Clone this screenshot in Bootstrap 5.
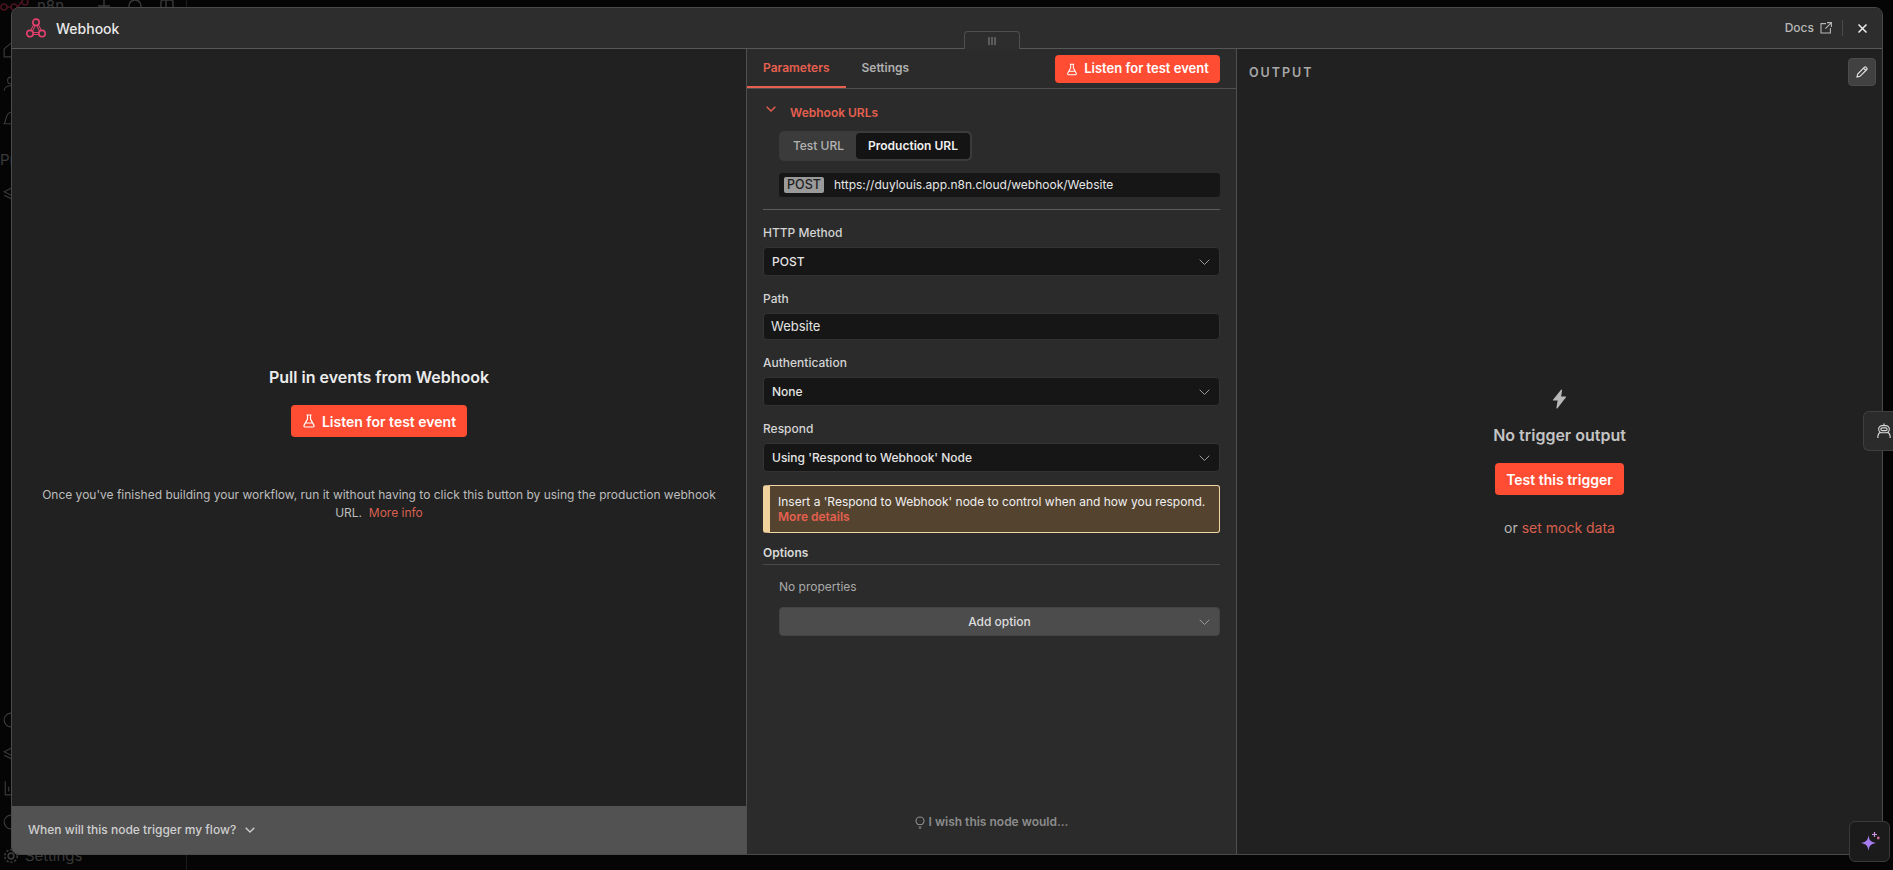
<!DOCTYPE html>
<html lang="en">
<head>
  <meta charset="UTF-8" />
  <title>Webhook</title>
  <meta name="viewport" content="width=device-width, initial-scale=1" />
  <link href="https://cdn.jsdelivr.net/npm/bootstrap@5.3.2/dist/css/bootstrap.min.css" rel="stylesheet" />
  <style>
    html, body { height: 100%; }
    body {
      background-color: #050505;
      font-family: Inter, "Liberation Sans", sans-serif;
      font-size: 12px;
      overflow: hidden;
      color: #e4e4e4;
    }
    svg { display: block; flex: none; }

    /* dimmed app behind the modal */
    .app-side {
      width: 187px;
      height: 873px;
      border-right: 1px solid #1c1c1c;
      color: #3a3a3a;
    }
    .app-top { height: 18px; margin: -3px 0 18px; flex-shrink: 0; }
    .app-logo { color: #4a1320; margin-right: 7px; }
    .app-brand { font-size: 15px; margin-right: 34px; }
    .top-gap { margin-right: 18px; }
    .app-item { height: 34px; flex-shrink: 0; padding-left: 3px; font-size: 15px; gap: 6px; }
    .app-head { padding-left: 0; margin-top: 8px; }
    .app-foot { margin-top: auto; }

    /* modal */
    .ndv {
      position: absolute;
      left: 11px;
      top: 7px;
      width: 1872px;
      height: 848px;
      background: #212121;
      border: 1px solid #4a4a4a;
      border-radius: 8px;
      overflow: hidden;
    }
    .ndv-head {
      height: 41px;
      flex-shrink: 0;
      background: #2d2d2d;
      border-bottom: 1px solid #575757;
      padding: 0 14px;
    }
    .ndv-title { font-size: 14px; font-weight: 500; color: #e8e8e8; margin-left: 10px; }
    .docs-link { color: #b8b8b8; font-weight: 500; font-size: 12px; text-decoration: none; gap: 6px; }
    .head-sep { width: 1px; height: 16px; background: #4a4a4a; margin: 0 14px 0 10px; }
    .ndv-body { flex: 1; min-height: 0; }

    .pane-input { width: 734px; flex-shrink: 0; }
    .input-mid { padding-top: 32px; }
    .pull-title { font-size: 16px; font-weight: 600; color: #ececec; margin-bottom: 16px; }
    .pull-note { font-size: 12px; line-height: 18px; color: #bdbdbd; width: 690px; margin-top: 49px; }
    .input-foot {
      height: 48px;
      flex-shrink: 0;
      background: #525252;
      padding-left: 16px;
      color: #cfcfcf;
      font-weight: 500;
      gap: 9px;
    }

    .pane-params {
      width: 491px;
      flex-shrink: 0;
      background: #2b2b2b;
      border-left: 1px solid #4f4f4f;
      border-right: 1px solid #4f4f4f;
    }
    .drag-tab {
      position: absolute;
      left: 952px;
      top: 23px;
      width: 56px;
      height: 18px;
      background: #2d2d2d;
      border: 1px solid #4f4f4f;
      border-bottom: 0;
      border-radius: 4px 4px 0 0;
      color: #8a8a8a;
    }
    .tab-row { height: 40px; flex-shrink: 0; border-bottom: 1px solid #4f4f4f; padding-right: 16px; }
    .tab-link {
      padding: 0 16px;
      height: 39px;
      line-height: 38px;
      font-weight: 600;
      font-size: 12px;
      color: #b0b0b0;
      text-decoration: none;
    }
    .tab-link.on { color: #e5604f; border-bottom: 2px solid #e5604f; }

    .btn-hot, .btn-hot:hover {
      background: #ff4d33;
      border: 0;
      color: #fff;
      font-weight: 600;
      border-radius: 4px;
      gap: 6px;
    }
    .btn-top { height: 28px; width: 165px; font-size: 13px; padding: 0; margin-top: 6px; }
    .btn-mid { height: 32px; width: 176px; font-size: 14px; padding: 0; }
    .btn-trig { height: 32px; width: 129px; font-size: 14px; padding: 0; }

    .params-body { padding: 0 16px; }
    .hook-head { height: 42px; flex-shrink: 0; padding: 16px 0 0 3px; line-height: 15px; color: #e5604f; font-weight: 600; font-size: 12px; gap: 14px; }
    .hook-caret { margin-top: 1px; }
    .seg {
      width: 193px;
      height: 30px;
      flex-shrink: 0;
      margin-left: 16px;
      padding: 2px;
      background: #3b3b3b;
      border-radius: 5px;
    }
    .seg span { display: flex; align-items: center; justify-content: center; font-weight: 500; font-size: 12px; border-radius: 4px; }
    .seg .off { width: 75px; color: #b3b3b3; }
    .seg .act { width: 114px; background: #141414; color: #f0f0f0; font-weight: 600; }
    .url-box {
      margin: 12px 0 12px 16px;
      height: 24px;
      flex-shrink: 0;
      background: #161616;
      border-radius: 3px;
      padding-left: 5px;
      color: #e8e8e8;
      font-size: 12px;
    }
    .url-verb {
      width: 40px;
      height: 16px;
      line-height: 16px;
      text-align: center;
      background: #9a9a9a;
      color: #1e1e1e;
      border-radius: 2px;
      font-size: 12.5px;
      font-weight: 500;
      margin-right: 10px;
    }
    .url-rule { border-top: 1px solid #5c5c5c; margin: 0 0 15px; }

    .fld-label { display: block; font-size: 12px; font-weight: 500; color: #d4d4d4; line-height: 16px; margin: 0 0 6px; }
    .fld-box.form-control {
      background: #161616;
      border: 1px solid #333;
      border-radius: 4px;
      color: #e4e4e4;
      font-size: 12px;
      font-weight: 500;
      height: 29px;
      min-height: 0;
      flex-shrink: 0;
      line-height: 1;
      padding: 0 27px 0 8px;
      margin-bottom: 15px;
      position: relative;
    }
    .fld-box.fld-text { height: 27px; font-weight: 400; font-size: 13px; padding-left: 7px; }
    .fld-caret { position: absolute; right: 9px; top: 11px; color: #9a9a9a; }

    .warn-box.alert {
      background: #54432f;
      border: 1px solid #f5d7a3;
      border-left: 7px solid #f0d29c;
      border-radius: 3px;
      height: 48px;
      flex-shrink: 0;
      padding: 8px 8px 0 8px;
      margin: -2px 0 12px;
      color: #f0f0f0;
      font-size: 12px;
      font-weight: 400;
      line-height: 15px;
    }
    .warn-box a { color: #e5604f; font-weight: 600; text-decoration: none; display: block; }
    .opt-head { font-weight: 600; color: #d8d8d8; line-height: 16px; padding-bottom: 3px; border-bottom: 1px solid #4a4a4a; }
    .opt-none { margin: 13px 0 11px 16px; line-height: 18px; color: #a9a9a9; font-size: 12px; }
    .opt-add {
      margin-left: 16px;
      height: 29px;
      flex-shrink: 0;
      background: #4c4c4c;
      border: 1px solid #444;
      border-radius: 4px;
      color: #dedede;
      font-weight: 500;
      font-size: 12px;
      position: relative;
    }
    .wish { color: #8c8c8c; font-weight: 600; font-size: 12px; gap: 4px; height: 64px; flex-shrink: 0; }

    .pane-out { flex: 1; position: relative; }
    .out-label { position: absolute; left: 12px; top: 15px; font-size: 12.5px; font-weight: 600; letter-spacing: 2px; color: #a8a8a8; }
    .out-edit {
      position: absolute;
      right: 6px;
      top: 9px;
      width: 28px;
      height: 28px;
      background: #414141;
      border: 1px solid #4c4c4c;
      border-radius: 4px;
      padding: 0;
      color: #e8e8e8;
    }
    .out-mid { padding-top: 340px; }
    .out-bolt { color: #b8b8b8; margin-bottom: 16px; }
    .out-title { font-size: 16px; font-weight: 600; color: #c4c4c4; line-height: 20px; margin-bottom: 18px; }
    .out-or { margin-top: 22px; font-size: 14px; color: #b8b8b8; }
    .hot-link { color: #d9604f; text-decoration: none; }

    .side-tab {
      position: absolute;
      right: 0;
      top: 411px;
      width: 30px;
      height: 40px;
      background: #2b2b2b;
      border: 1px solid #3f3f3f;
      border-right: 0;
      border-radius: 6px 0 0 6px;
      color: #d8d8d8;
      padding-left: 12px;
    }
    .ai-btn {
      position: absolute;
      left: 1849px;
      top: 821px;
      width: 41px;
      height: 41px;
      background: #1b1b1b;
      border: 1px solid #3a3a3a;
      border-radius: 6px;
      padding: 0;
    }
  </style>
</head>
<body>
  <!-- app behind the modal, mostly hidden -->
  <aside class="app-side d-flex flex-column">
    <div class="app-top d-flex align-items-center">
      <svg class="app-logo" width="30" height="16" viewBox="0 0 30 16" fill="none" stroke="currentColor" stroke-width="1.6"><circle cx="4" cy="9" r="3"/><circle cx="14" cy="9" r="3"/><circle cx="25" cy="4" r="3"/><path d="M7 9h4M17 9c3 0 2-5 5-5"/></svg>
      <span class="app-brand">n8n</span>
      <svg class="top-gap" width="12" height="12" viewBox="0 0 12 12" stroke="currentColor" stroke-width="1.4"><path d="M6 0v12M0 6h12"/></svg>
      <svg class="top-gap" width="14" height="14" viewBox="0 0 14 14" fill="none" stroke="currentColor" stroke-width="1.4"><circle cx="7" cy="7" r="6"/></svg>
      <svg width="14" height="14" viewBox="0 0 14 14" fill="none" stroke="currentColor" stroke-width="1.4"><rect x="1" y="1" width="12" height="12" rx="2"/><path d="M6 1v12"/></svg>
    </div>
    <div class="app-item d-flex align-items-center"><svg width="16" height="16" viewBox="0 0 14 14" fill="none" stroke="currentColor"><path d="M1 6l6-5 6 5v7H1z"/></svg></div>
    <div class="app-item d-flex align-items-center"><svg width="16" height="16" viewBox="0 0 14 14" fill="none" stroke="currentColor"><circle cx="7" cy="4" r="3"/><path d="M1 13c0-6 12-6 12 0"/></svg></div>
    <div class="app-item d-flex align-items-center"><svg width="16" height="16" viewBox="0 0 14 14" fill="none" stroke="currentColor"><path d="M1 12c2-2 1-10 6-10s4 8 6 10z"/></svg></div>
    <div class="app-item app-head d-flex align-items-center">Projects</div>
    <div class="app-item d-flex align-items-center"><svg width="16" height="16" viewBox="0 0 14 14" fill="none" stroke="currentColor"><path d="M1 5l6-3 6 3-6 3zM1 8l6 3 6-3"/></svg></div>
    <div class="app-item app-foot d-flex align-items-center"><svg width="16" height="16" viewBox="0 0 14 14" fill="none" stroke="currentColor"><circle cx="7" cy="7" r="6"/></svg></div>
    <div class="app-item d-flex align-items-center"><svg width="16" height="16" viewBox="0 0 14 14" fill="none" stroke="currentColor"><path d="M1 5l6-3 6 3-6 3zM1 8l6 3 6-3"/></svg></div>
    <div class="app-item d-flex align-items-center"><svg width="16" height="16" viewBox="0 0 14 14" fill="none" stroke="currentColor"><path d="M2 1v12h11M5 10V6M9 10V3"/></svg></div>
    <div class="app-item d-flex align-items-center"><svg width="16" height="16" viewBox="0 0 14 14" fill="none" stroke="currentColor"><circle cx="7" cy="7" r="6"/></svg></div>
    <div class="app-item d-flex align-items-center"><svg width="16" height="16" viewBox="0 0 14 14" fill="none" stroke="currentColor" stroke-width="1.4"><circle cx="7" cy="7" r="2.5"/><circle cx="7" cy="7" r="5.5" stroke-dasharray="2 1.5"/></svg>Settings</div>
  </aside>

  <section class="ndv d-flex flex-column">
    <header class="ndv-head d-flex align-items-center">
      <svg width="20" height="20" viewBox="0 0 20 20" fill="none">
        <path d="M10 4.500 4 15.500h12z" stroke="#e5416e" stroke-width="2.8" stroke-linejoin="round"/>
        <path d="M10 4.500 4 15.500h12z" stroke="#2d2d2d" stroke-width="1" stroke-linejoin="round"/>
        <g stroke="#e5416e" stroke-width="1.6" fill="#2d2d2d"><circle cx="10" cy="4.300" r="3.200"/><circle cx="4" cy="15.600" r="3.200"/><circle cx="16" cy="15.600" r="3.200"/></g>
      </svg>
      <span class="ndv-title">Webhook</span>
      <a class="docs-link d-flex align-items-center ms-auto" href="#">Docs
        <svg width="12" height="12" viewBox="0 0 12 12" fill="none" stroke="currentColor" stroke-width="1.1"><path d="M6 1.600H1V11h9.400V6M7 .6h4.400V5M11.200.8 5.400 6.600"/></svg>
      </a>
      <span class="head-sep"></span>
      <svg width="11" height="11" viewBox="0 0 11 11" stroke="#f0f0f0" stroke-width="1.5"><path d="M1.500 1.500l8 8M9.500 1.500l-8 8"/></svg>
    </header>

    <div class="ndv-body d-flex">
      <div class="pane-input d-flex flex-column">
        <div class="input-mid flex-grow-1 d-flex flex-column align-items-center justify-content-center text-center">
          <div class="pull-title">Pull in events from Webhook</div>
          <button class="btn btn-hot btn-mid d-flex align-items-center justify-content-center" type="button">
            <svg width="14" height="14" viewBox="0 0 14 14" fill="none" stroke="#fff" stroke-width="1.2"><path d="M4.500 1h5M5.500 1v4L2 11.400c-.4.800.1 1.600 1 1.600h8c.9 0 1.400-.8 1-1.600L8.500 5V1M3.800 9h6.400"/></svg>
            Listen for test event
          </button>
          <p class="pull-note mb-0">Once you've finished building your workflow, run it without having to click this button by using the production webhook URL.&nbsp; <a class="hot-link" href="#">More info</a></p>
        </div>
        <div class="input-foot d-flex align-items-center">
          When will this node trigger my flow?
          <svg width="10" height="6" viewBox="0 0 10 6" fill="none" stroke="currentColor" stroke-width="1.3"><path d="M.7.7 5 5 9.300.7"/></svg>
        </div>
      </div>

      <div class="pane-params d-flex flex-column">
        <div class="tab-row d-flex align-items-start">
          <a class="tab-link on" href="#">Parameters</a>
          <a class="tab-link" href="#">Settings</a>
          <button class="btn btn-hot btn-top d-flex align-items-center justify-content-center ms-auto" type="button">
            <svg width="12" height="13" viewBox="0 0 14 14" fill="none" stroke="#fff" stroke-width="1.2"><path d="M4.500 1h5M5.500 1v4L2 11.400c-.4.800.1 1.600 1 1.600h8c.9 0 1.400-.8 1-1.600L8.500 5V1M3.800 9h6.400"/></svg>
            Listen for test event
          </button>
        </div>
        <div class="params-body flex-grow-1 d-flex flex-column">
          <div class="hook-head d-flex align-items-start">
            <svg class="hook-caret" width="10" height="6" viewBox="0 0 10 6" fill="none" stroke="currentColor" stroke-width="1.4"><path d="M.7.7 5 5 9.300.7"/></svg>
            <span>Webhook URLs</span>
          </div>
          <div class="seg d-flex">
            <span class="off">Test URL</span>
            <span class="act">Production URL</span>
          </div>
          <div class="url-box d-flex align-items-center">
            <span class="url-verb">POST</span>
            https://duylouis.app.n8n.cloud/webhook/Website
          </div>
          <div class="url-rule"></div>

          <label class="fld-label">HTTP Method</label>
          <div class="form-control fld-box d-flex align-items-center">POST
            <svg class="fld-caret" width="11" height="7" viewBox="0 0 11 7" fill="none" stroke="currentColor"><path d="M.7.7l4.800 4.800L10.300.7"/></svg>
          </div>
          <label class="fld-label">Path</label>
          <div class="form-control fld-box fld-text d-flex align-items-center">Website</div>
          <label class="fld-label">Authentication</label>
          <div class="form-control fld-box d-flex align-items-center">None
            <svg class="fld-caret" width="11" height="7" viewBox="0 0 11 7" fill="none" stroke="currentColor"><path d="M.7.7l4.800 4.800L10.300.7"/></svg>
          </div>
          <label class="fld-label">Respond</label>
          <div class="form-control fld-box d-flex align-items-center">Using 'Respond to Webhook' Node
            <svg class="fld-caret" width="11" height="7" viewBox="0 0 11 7" fill="none" stroke="currentColor"><path d="M.7.7l4.800 4.800L10.300.7"/></svg>
          </div>

          <div class="alert warn-box">
            Insert a 'Respond to Webhook' node to control when and how you respond.
            <a href="#">More details</a>
          </div>
          <div class="opt-head">Options</div>
          <div class="opt-none">No properties</div>
          <div class="opt-add d-flex align-items-center justify-content-center">Add option
            <svg class="fld-caret" width="11" height="7" viewBox="0 0 11 7" fill="none" stroke="#9a9a9a"><path d="M.7.7l4.800 4.800L10.300.7"/></svg>
          </div>
          <div class="flex-grow-1"></div>
          <div class="wish d-flex align-items-center justify-content-center">
            <svg width="10" height="13" viewBox="0 0 10 13" fill="none" stroke="currentColor" stroke-width="1.1"><path d="M3 8.500C1.800 7.700 1 6.500 1 5a4 4 0 0 1 8 0c0 1.500-.8 2.700-2 3.500zM3.500 11h3M4.300 12.500h1.400"/></svg>
            I wish this node would...
          </div>
        </div>
      </div>

      <div class="pane-out">
        <div class="out-label">OUTPUT</div>
        <button class="btn out-edit d-flex align-items-center justify-content-center" type="button">
          <svg width="12" height="12" viewBox="0 0 12 12" fill="none" stroke="currentColor" stroke-width="1.1"><path d="M1 11l.7-3L8.500 1.200a1 1 0 0 1 1.400 0l.9.900a1 1 0 0 1 0 1.400L4 10.300zM7.500 2.200l2.300 2.300"/></svg>
        </button>
        <div class="out-mid d-flex flex-column align-items-center">
          <svg class="out-bolt" width="15" height="20" viewBox="0 0 15 20" fill="currentColor" stroke="currentColor" stroke-width="1.2" stroke-linejoin="round"><path d="M9.500 1 1.500 11h4.800L5 19l8.500-11H8.500z"/></svg>
          <div class="out-title">No trigger output</div>
          <button class="btn btn-hot btn-trig" type="button">Test this trigger</button>
          <div class="out-or">or <a class="hot-link" href="#">set mock data</a></div>
        </div>
      </div>
    </div>
    <div class="drag-tab d-flex align-items-center justify-content-center">
      <svg width="8" height="8" viewBox="0 0 8 8" stroke="currentColor"><path d="M1 0v8M4 0v8M7 0v8"/></svg>
    </div>
  </section>

  <div class="side-tab d-flex align-items-center">
    <svg width="16" height="16" viewBox="0 0 18 18" fill="none" stroke="currentColor" stroke-width="1.3"><path d="M9 .5v2"/><rect x="3" y="3" width="12" height="8" rx="4"/><rect x="5.500" y="5.500" width="7" height="3" rx="1.500"/><path d="M2 17c0-3 1.500-6 3-6.500M16 17c0-3-1.500-6-3-6.500"/></svg>
  </div>
  <button class="btn ai-btn d-flex align-items-center justify-content-center" type="button">
    <svg width="20" height="20" viewBox="0 0 20 20"><path d="M8.500 3c.7 5 1.800 7 7.500 8-5.700 1-6.800 3-7.500 8-.7-5-1.800-7-7.500-8 5.700-1 6.800-3 7.500-8z" fill="#a97bf0"/><path d="M14.500 0v5M12 2.500h5" stroke="#c99be0" stroke-width="1.2"/><circle cx="18.300" cy="6" r="1.400" fill="#c96a9a"/></svg>
  </button>
</body>
</html>
